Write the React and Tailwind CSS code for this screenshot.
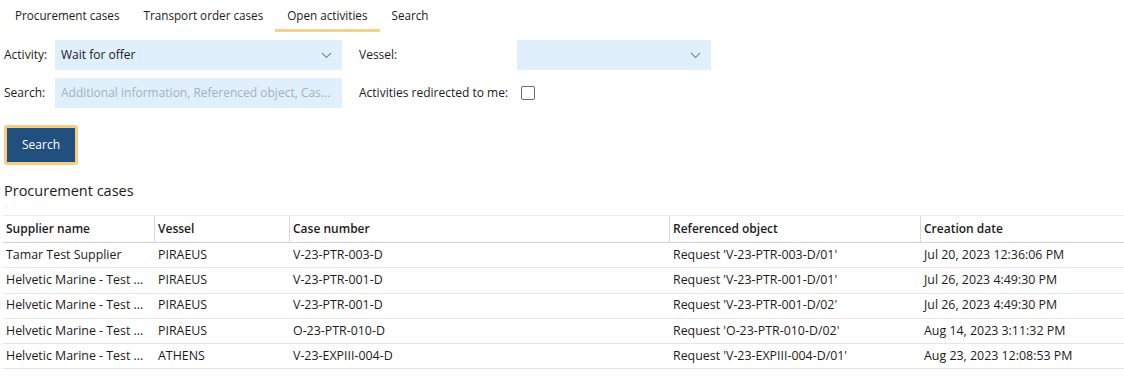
import React from "react";

const rows = [
  ["Tamar Test Supplier", "PIRAEUS", "V-23-PTR-003-D", "Request 'V-23-PTR-003-D/01'", "Jul 20, 2023 12:36:06 PM"],
  ["Helvetic Marine - Test ...", "PIRAEUS", "V-23-PTR-001-D", "Request 'V-23-PTR-001-D/01'", "Jul 26, 2023 4:49:30 PM"],
  ["Helvetic Marine - Test ...", "PIRAEUS", "V-23-PTR-001-D", "Request 'V-23-PTR-001-D/02'", "Jul 26, 2023 4:49:30 PM"],
  ["Helvetic Marine - Test ...", "PIRAEUS", "O-23-PTR-010-D", "Request 'O-23-PTR-010-D/02'", "Aug 14, 2023 3:11:32 PM"],
  ["Helvetic Marine - Test ...", "ATHENS", "V-23-EXPIII-004-D", "Request 'V-23-EXPIII-004-D/01'", "Aug 23, 2023 12:08:53 PM"],
];

const cols = ["w-[151px]", "w-[135px]", "w-[380px]", "w-[251px]", "flex-1"];
const heads = ["Supplier name", "Vessel", "Case number", "Referenced object", "Creation date"];

function Chevron() {
  return (
    <svg width="11" height="7" viewBox="0 0 11 7" className="text-[#8a8a8a]">
      <path d="M1 1l4.5 4.5L10 1" fill="none" stroke="currentColor" strokeWidth="1.1" />
    </svg>
  );
}

export default function App() {
  return (
    <div className="w-[1124px] h-[389px] bg-white text-[#1b1b1b] text-[12px] overflow-hidden" style={{ fontFamily: '"Open Sans", "Noto Sans", sans-serif' }}>
      {/* Tabs */}
      <div className="flex pl-[3px] h-[32px] text-[11.7px]">
        {["Procurement cases", "Transport order cases", "Open activities", "Search"].map((t, i) => (
          <div key={t} className={"px-3 flex items-center border-b-[3px] " + (i === 2 ? "border-[#f8d188]" : "border-transparent")}>
            <span className="pt-[2px]">{t}</span>
          </div>
        ))}
      </div>

      {/* Form */}
      <div className="pl-[4px] mt-[8px] flex flex-col gap-[8px]">
        <div className="flex items-center h-[30px]">
          <div className="w-[51px]">Activity:</div>
          <div className="w-[287px] h-[30px] bg-[#e0effc] flex items-center justify-between pl-[6px] pr-[10px]">
            <span>Wait for offer</span>
            <Chevron />
          </div>
          <div className="w-[175px] pl-[17px]">Vessel:</div>
          <div className="w-[194px] h-[30px] bg-[#e0effc] flex items-center justify-end pr-[10px]">
            <Chevron />
          </div>
        </div>
        <div className="flex items-center h-[30px]">
          <div className="w-[51px]">Search:</div>
          <div className="w-[287px] h-[30px] bg-[#e0effc] flex items-center pl-[6px] text-[#a9b0b8]">
            Additional information, Referenced object, Cas...
          </div>
          <div className="pl-[17px] w-[179px]">Activities redirected to me:</div>
          <div className="w-[14px] h-[14px] border border-[#6b6b6b] rounded-[2px] bg-white" />
        </div>
      </div>

      {/* Button */}
      <div className="pl-[4px] mt-[17px]">
        <button className="w-[74px] h-[40px] border-[3px] border-[#f8cd7c] rounded-[3px] bg-[#21507f] text-white text-[12px]">
          Search
        </button>
      </div>

      <div className="pl-[4px] mt-[16px] text-[14.5px] text-[#1b1b1b] leading-[20px]">Procurement cases</div>

      {/* Table */}
      <div className="ml-[3px] mt-[14px] border-t border-[#ececec]">
        <div className="flex h-[27px] border-b border-[#cfcfcf] font-semibold">
          {heads.map((h, i) => (
            <div key={h} className={cols[i] + " flex items-center px-[3px] " + (i > 0 ? "border-l border-[#d9d9d9]" : "")}>
              {h}
            </div>
          ))}
        </div>
        {rows.map((r, ri) => (
          <div key={ri} className="flex h-[25.3px] border-b border-[#e6e6e6] text-[12.4px]">
            {r.map((c, i) => (
              <div key={i} className={cols[i] + " flex items-center px-[3px] whitespace-nowrap " + (i > 0 ? "border-l border-transparent" : "")}>
                {c}
              </div>
            ))}
          </div>
        ))}
      </div>
    </div>
  );
}
